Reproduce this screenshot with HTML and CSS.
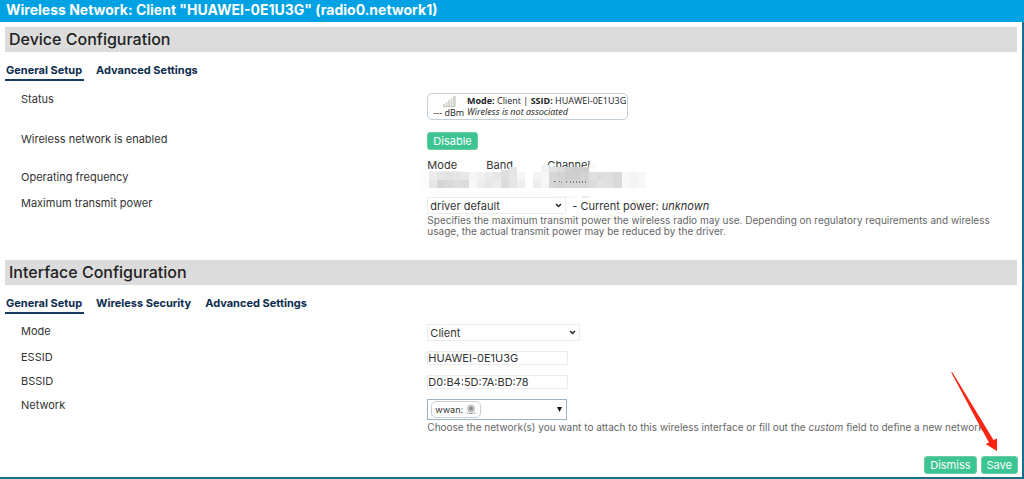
FILE: index.html
```html
<!DOCTYPE html>
<html lang="en">
<head>
<meta charset="utf-8">
<title>Wireless Network</title>
<link rel="stylesheet" href="styles.css">
</head>
<body>
<main class="dialog">
  <h1 class="dialog-title">Wireless Network: Client "HUAWEI-0E1U3G" (radio0.network1)</h1>

  <section class="section">
    <h2 class="section-title">Device Configuration</h2>
    <nav class="tabs">
      <a class="tab active" href="#general">General Setup</a>
      <a class="tab" href="#advanced">Advanced Settings</a>
    </nav>
    <div class="rows">
      <div class="row status-row">
        <div class="label">Status</div>
        <div class="field">
          <div class="status-badge">
            <div class="signal">
              <svg width="14" height="12" viewBox="0 0 14 12" aria-hidden="true">
                <path d="M2 11V9M4.500 11V7M7 11V5M9.500 11V3M12 11V1" fill="none" stroke="#d6d6d2" stroke-width="2"/>
                <path d="M1 11.500H13V1" fill="none" stroke="#c0c0bc"/>
              </svg>
              <span>--- dBm</span>
            </div>
            <div><b>Mode:</b> Client | <b>SSID:</b> HUAWEI-0E1U3G<br><i>Wireless is not associated</i></div>
          </div>
        </div>
      </div>
      <div class="row enabled-row">
        <div class="label">Wireless network is enabled</div>
        <div class="field"><button class="btn" type="button">Disable</button></div>
      </div>
      <div class="row frequency-row">
        <div class="label">Operating frequency</div>
        <div class="field">
          <div class="frequency-heads"><span>Mode</span><span>Band</span><span>Channel</span></div>
          <svg class="mosaic" width="226" height="34" viewBox="0 0 226 34" shape-rendering="crispEdges" aria-hidden="true">
            <rect x="0" y="8" width="8" height="16" fill="#fcfcfc"/>
            <rect x="8" y="7" width="32" height="2" fill="#efefef"/>
            <rect x="8" y="8" width="8" height="8" fill="#ececec"/><rect x="8" y="16" width="8" height="8" fill="#e6e6e6"/>
            <rect x="16" y="8" width="8" height="8" fill="#e6e6e6"/><rect x="16" y="16" width="8" height="8" fill="#d5d5d5"/>
            <rect x="24" y="8" width="8" height="8" fill="#e2e2e2"/><rect x="24" y="16" width="8" height="8" fill="#d9d9d9"/>
            <rect x="32" y="8" width="8" height="8" fill="#e5e5e5"/><rect x="32" y="16" width="8" height="8" fill="#dedede"/>
            <rect x="40" y="8" width="8" height="8" fill="#e9e9e9"/><rect x="40" y="16" width="8" height="8" fill="#dcdcdc"/>
            <rect x="48" y="8" width="8" height="8" fill="#f5f5f5"/><rect x="48" y="16" width="8" height="8" fill="#f7f7f7"/>
            <rect x="56" y="8" width="8" height="8" fill="#f1f1f1"/><rect x="56" y="16" width="8" height="8" fill="#ededed"/>
            <rect x="64" y="8" width="8" height="8" fill="#ececec"/><rect x="64" y="16" width="8" height="8" fill="#e8e8e8"/>
            <rect x="72" y="8" width="8" height="8" fill="#e6e6e6"/><rect x="72" y="16" width="8" height="8" fill="#ececec"/>
            <rect x="80" y="6" width="8" height="10" fill="#dfdfdf"/><rect x="80" y="16" width="8" height="8" fill="#dcdcdc"/>
            <rect x="88" y="3" width="8" height="13" fill="#e6e6e6"/><rect x="88" y="16" width="8" height="8" fill="#e5e5e5"/>
            <rect x="96" y="8" width="8" height="8" fill="#f6f6f6"/><rect x="96" y="16" width="8" height="8" fill="#eeeeee"/>
            <rect x="112" y="8" width="8" height="8" fill="#f3f3f3"/><rect x="112" y="16" width="8" height="8" fill="#ececec"/>
            <rect x="120" y="1" width="8" height="7" fill="#f2f2f2"/><rect x="120" y="8" width="8" height="16" fill="#f6f6f6"/>
            <rect x="128" y="3" width="8" height="5" fill="#e2e2e2"/><rect x="128" y="8" width="8" height="16" fill="#d6d6d6"/>
            <rect x="136" y="3" width="8" height="5" fill="#dcdcdc"/><rect x="136" y="8" width="8" height="16" fill="#d3d3d3"/>
            <rect x="144" y="3" width="8" height="5" fill="#d0d0d0"/><rect x="144" y="8" width="16" height="8" fill="#cfcfcf"/>
            <rect x="152" y="3" width="16" height="5" fill="#cccccc"/><rect x="144" y="16" width="24" height="8" fill="#d6d6d6"/>
            <rect x="160" y="8" width="8" height="8" fill="#d3d3d3"/>
            <rect x="168" y="1" width="8" height="7" fill="#fbfbfb"/><rect x="168" y="8" width="8" height="8" fill="#dfe1e3"/><rect x="168" y="16" width="8" height="8" fill="#dcdcdc"/>
            <rect x="176" y="8" width="8" height="8" fill="#dcdcdc"/><rect x="176" y="16" width="8" height="8" fill="#e2e2e2"/>
            <rect x="184" y="8" width="8" height="8" fill="#dedede"/><rect x="184" y="16" width="8" height="8" fill="#e0e0e0"/>
            <rect x="192" y="8" width="9" height="16" fill="#d9d9d9"/>
            <rect x="201" y="8" width="8" height="16" fill="#f8f8f8"/>
            <rect x="209" y="8" width="8" height="16" fill="#f4f4f4"/>
            <rect x="217" y="8" width="8" height="16" fill="#f8f8f8"/>
            <rect x="132" y="32" width="24" height="2" fill="#f7f9f8"/><rect x="161" y="32" width="8" height="2" fill="#eeefee"/>
            <path d="M133 17h2M138 17h1M140 18h1M145 17v2M149 17v2M152 17v2M155 17v2M158 17v2M161 17v2M164 17v2" fill="none" stroke="#777"/>
          </svg>
        </div>
      </div>
      <div class="row power-row">
        <label class="label" for="power">Maximum transmit power</label>
        <div class="field">
          <div class="power-line">
            <select class="select select-power" id="power"><option>driver default</option></select>
            <span>- Current power: <i>unknown</i></span>
          </div>
          <p class="hint">Specifies the maximum transmit power the wireless radio may use. Depending on regulatory requirements and wireless usage, the actual transmit power may be reduced by the driver.</p>
        </div>
      </div>
    </div>
  </section>

  <section class="section interface">
    <h2 class="section-title">Interface Configuration</h2>
    <nav class="tabs">
      <a class="tab active" href="#if-general">General Setup</a>
      <a class="tab" href="#if-security">Wireless Security</a>
      <a class="tab" href="#if-advanced">Advanced Settings</a>
    </nav>
    <div class="rows">
      <div class="row mode-row">
        <label class="label" for="mode">Mode</label>
        <div class="field"><select class="select select-mode" id="mode"><option>Client</option></select></div>
      </div>
      <div class="row text-row">
        <label class="label" for="essid">ESSID</label>
        <div class="field"><input class="input" id="essid" type="text" value="HUAWEI-0E1U3G"></div>
      </div>
      <div class="row text-row">
        <label class="label" for="bssid">BSSID</label>
        <div class="field"><input class="input" id="bssid" type="text" value="D0:B4:5D:7A:BD:78"></div>
      </div>
      <div class="row">
        <div class="label" id="network-label">Network</div>
        <div class="field">
          <button class="network-select" type="button" aria-labelledby="network-label">
            <span class="chip">wwan:
              <svg width="10" height="11" viewBox="0 0 10 11" aria-hidden="true">
                <circle cx="5" cy="4.500" r="3.500" fill="#ccc" stroke="#bbb"/>
                <circle cx="5" cy="4.500" r="2" fill="#8c8c8c"/>
                <path d="M0.500 10L3 7.500M9.500 10L7 7.500M3 9.500H7" fill="none" stroke="#999"/>
              </svg>
            </span>
            <svg width="5" height="5" viewBox="0 0 5 5" aria-hidden="true"><path d="M0 0H5L2.500 5Z" fill="#111"/></svg>
          </button>
          <p class="hint">Choose the network(s) you want to attach to this wireless interface or fill out the <i>custom</i> field to define a new network.</p>
        </div>
      </div>
    </div>
  </section>

  <footer class="actions">
    <button class="btn" type="button">Dismiss</button>
    <button class="btn" type="button">Save</button>
  </footer>
  <svg class="arrow" width="50" height="82" viewBox="0 0 50 82" aria-hidden="true">
    <path d="M1 1L2.500 1.500L43.500 69L47 67.500L47 80L35.500 73L39 71.500L25 46Z" fill="#fb2312"/>
  </svg>
</main>
</body>
</html>
```
FILE: styles.css
```css
* { box-sizing: border-box; }
body {
  margin: 0;
  background: #fff;
  color: #333;
  font: 11px/14px Inter, "Open Sans", sans-serif;
}
button, input, select { font: inherit; color: inherit; }
.dialog {
  position: relative;
  min-height: 100vh;
  display: flex;
  flex-direction: column;
  border-right: 2px solid #17708f;
  border-bottom: 2px solid #17708f;
}
.dialog-title {
  margin: 0 -2px 5px 0;
  padding: 0 6px 3px;
  background: #00a2e3;
  color: #fff;
  font-size: 14px;
  font-weight: 700;
  line-height: 19px;
}
.section { padding: 0 5px; }
.interface { margin-top: 23px; }
.section-title {
  margin: 0;
  padding: 0 4px;
  background: #dcdcdc;
  color: #222;
  font-size: 16px;
  font-weight: 500;
  line-height: 25px;
}
.tabs { display: flex; gap: 11px; padding-top: 10px; }
.tab {
  padding: 0 2px 1px 1px;
  border-bottom: 2px solid transparent;
  color: #0b2c4e;
  font-weight: 700;
  line-height: 16px;
  text-decoration: none;
}
.tab.active { border-color: #173a5e; }
.rows { padding: 11px 0 0 16px; }
.interface .rows { padding-top: 10px; }
.row { display: grid; grid-template-columns: 408fr 592fr; }
.field { position: relative; display: flex; flex-direction: column; align-items: flex-start; }

.status-row { min-height: 40px; }
.status-badge {
  display: flex;
  gap: 3px;
  margin-top: 1px;
  padding: 1px 1px 1px 5px;
  border: 1px solid #c3d0da;
  border-radius: 5px;
  color: #222;
  font: 9px/11px "Open Sans", sans-serif;
}
.signal {
  display: flex;
  flex-direction: column;
  align-items: center;
  white-space: nowrap;
}
.enabled-row { min-height: 26px; }
.btn {
  height: 18px;
  padding: 0 5px;
  border: 1px solid #6ccba4;
  border-radius: 3px;
  background: #3cc492;
  color: #fff;
  line-height: 16px;
}
.frequency-row { min-height: 38px; }
.frequency-row .label { padding-top: 12px; }
.frequency-heads { display: grid; grid-template-columns: 59px 61px auto; }
.mosaic { position: absolute; left: -6px; top: 6px; }
.power-line { display: flex; align-items: center; gap: 6px; margin-top: 1px; }
.select {
  height: 17px;
  padding: 0 17px 0 2px;
  border: 1px solid #ececec;
  border-radius: 0;
  appearance: none;
  background: url("data:image/svg+xml,%3Csvg xmlns='http://www.w3.org/2000/svg' width='7' height='5'%3E%3Cpath d='M1 1l2.500 2.500L6 1' fill='none' stroke='%23222' stroke-width='1.500'/%3E%3C/svg%3E") no-repeat right 3px center;
}
.select-power { width: 139px; }
.select-mode { width: 153px; }
.hint {
  margin: 1px 0 0;
  color: #666;
  font-size: 10px;
  line-height: 11px;
}
.mode-row { min-height: 26px; }
.text-row { min-height: 24px; }
.input {
  width: 141px;
  height: 14px;
  margin-top: 1px;
  padding: 0;
  border: 1px solid #ececec;
}
.network-select {
  display: flex;
  align-items: center;
  justify-content: space-between;
  width: 140px;
  height: 21px;
  margin: 1px 0;
  padding: 0 4px 0 3px;
  border: 1px solid #9db2c0;
  background: #fff;
}
.chip {
  display: flex;
  align-items: center;
  gap: 3px;
  padding: 0 4px 0 3px;
  border: 1px solid #c3d0da;
  border-radius: 5px;
  font-size: 9px;
  line-height: 15px;
}
.actions {
  display: flex;
  justify-content: flex-end;
  gap: 4px;
  margin-top: auto;
  padding: 0 4px 3px;
}
.arrow { position: absolute; right: 22px; bottom: 24px; }
```
